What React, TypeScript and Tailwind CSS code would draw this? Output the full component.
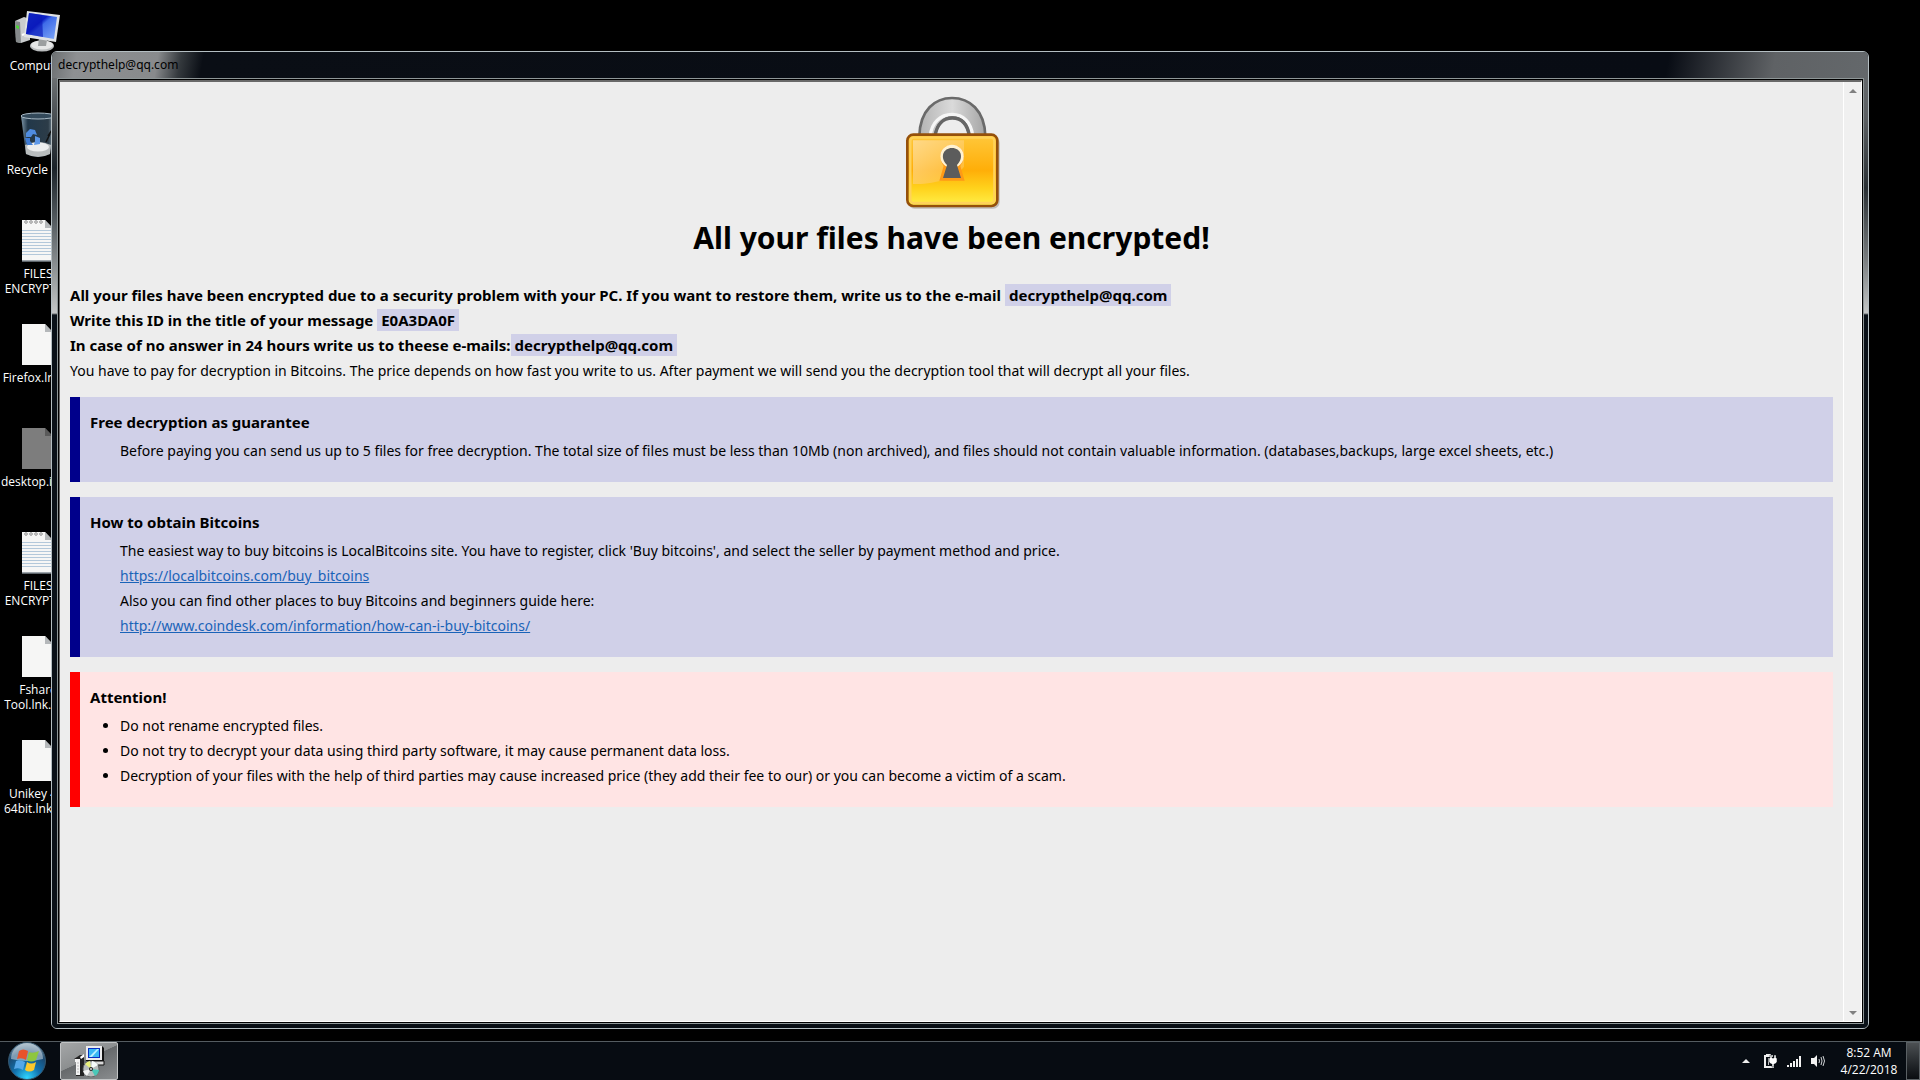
import React from 'react';

interface DesktopItem {
  kind: 'computer' | 'bin' | 'text' | 'blank' | 'system';
  lines: string[];
}

const desktopItems: DesktopItem[] = [
  { kind: 'computer', lines: ['Computer'] },
  { kind: 'bin', lines: ['Recycle Bin'] },
  { kind: 'text', lines: ['FILES', 'ENCRYPTED'] },
  { kind: 'blank', lines: ['Firefox.lnk.i..'] },
  { kind: 'system', lines: ['desktop.ini.i..'] },
  { kind: 'text', lines: ['FILES', 'ENCRYPTED'] },
  { kind: 'blank', lines: ['Fshare', 'Tool.lnk.id-..'] },
  { kind: 'blank', lines: ['Unikey 4.0', '64bit.lnk.id..'] },
];

const ComputerIcon: React.FC = () => (
  <svg viewBox="0 0 48 48" className="w-12 h-12" aria-hidden="true">
    <defs>
      <linearGradient id="screen" x1="0" y1="0" x2="1" y2="1">
        <stop offset="0" stopColor="#1a3fd0" />
        <stop offset="0.4" stopColor="#0a1ec4" />
        <stop offset="0.5" stopColor="#3f6ce8" />
        <stop offset="1" stopColor="#7fa8f8" />
      </linearGradient>
    </defs>
    <path d="M1 13 L10 9 L16 11 L16 32 L7 35 L2 34 Z" fill="#c9cccd" />
    <path d="M1 13 L6 14 L7 35 L2 34 Z" fill="#85898b" />
    <path d="M2 17 L5 18 V21 L2 20 Z" fill="#4fd03a" />
    <path d="M8 27 L14 25" stroke="#fff" strokeWidth="2" />
    <ellipse cx="28" cy="38" rx="12" ry="5.5" fill="#b9bcbd" />
    <ellipse cx="28" cy="37" rx="11" ry="4.5" fill="#e6e7e7" />
    <path d="M25 30 L33 32 L32 38 H24 Z" fill="#9c9fa0" />
    <path d="M13 3 L46 7 L42 34 L10 29 Z" fill="#dfe2e4" />
    <path d="M15 5 L43 9 L40 31 L12 26 Z" fill="url(#screen)" />
    <path d="M15 5 L28 7 L29 29 L12 26 Z" fill="#0a18b8" opacity="0.65" />
  </svg>
);

const BinIcon: React.FC = () => (
  <svg viewBox="0 0 48 48" className="w-12 h-12" aria-hidden="true">
    <defs>
      <linearGradient id="glass" x1="0" y1="0" x2="1" y2="0">
        <stop offset="0" stopColor="#7f97a8" />
        <stop offset="0.2" stopColor="#22384a" />
        <stop offset="0.8" stopColor="#2c3c48" />
        <stop offset="1" stopColor="#93a5b0" />
      </linearGradient>
    </defs>
    <path d="M7 4 L41 4 L36 42 Q24 48 12 42 Z" fill="url(#glass)" />
    <ellipse cx="24" cy="4" rx="17" ry="3" fill="#33495a" stroke="#a9bac6" strokeWidth="1" />
    <path d="M11 33 Q24 27 37 33 L36 42 Q24 48 12 42 Z" fill="#b9bdbe" />
    <ellipse cx="24" cy="35" rx="11" ry="4.5" fill="#eceeee" />
    <path d="M12 21 L16 17 L21 18 L23 23 L19 22 L17 25 L12 25 Z" fill="#4f8ce0" />
    <path d="M11 26 L16 26 L16 29 L19 33 L13 33 Z" fill="#3f7bd3" />
    <path d="M21 24 L26 26 L26 32 L20 33 L21 29 Z" fill="#5d98e8" />
    <path d="M34 24 L38 18 M32 30 L36 22" stroke="#111" strokeWidth="1.5" />
  </svg>
);

const FileIcon: React.FC<{ kind: DesktopItem['kind'] }> = ({ kind }) => (
  <svg viewBox="0 0 48 48" className="w-12 h-12" aria-hidden="true">
    <path d="M8 4 H31 L40 14 V45 H8 Z" fill={kind === 'system' ? '#7d7d7d' : '#f6f6f5'} />
    <path d="M31 4 V12 H39 Z" fill={kind === 'system' ? '#5a5a5a' : '#b5b8ba'} />
    {kind === 'text' && (
      <g>
        <g stroke="#b3c8da" strokeWidth="1">
          <path d="M8 14.5 H40 M8 17.5 H40 M8 20.5 H40 M8 23.5 H40 M8 26.5 H40 M8 29.5 H40 M8 32.5 H40 M8 35.5 H40 M8 38.5 H40" />
        </g>
        <g fill="none" stroke="#777" strokeWidth="0.8">
          <circle cx="12" cy="6" r="1.3" />
          <circle cx="17" cy="6" r="1.3" />
          <circle cx="22" cy="6" r="1.3" />
          <circle cx="27" cy="6" r="1.3" />
        </g>
        <path d="M8 45 H40" stroke="#7f8990" strokeWidth="1.5" />
      </g>
    )}
  </svg>
);

const DesktopIcon: React.FC<{ item: DesktopItem }> = ({ item }) => (
  <li className="h-[104px] flex flex-col items-center">
    {item.kind === 'computer' && <ComputerIcon />}
    {item.kind === 'bin' && <BinIcon />}
    {item.kind !== 'computer' && item.kind !== 'bin' && <FileIcon kind={item.kind} />}
    <div className="mt-0.5 text-xs leading-[15px] text-white text-center whitespace-nowrap">
      {item.lines.map((line) => (
        <div key={line}>{line}</div>
      ))}
    </div>
  </li>
);

const Padlock: React.FC = () => (
  <svg viewBox="72 45 288 345" className="w-24 h-[115px]" role="img" aria-label="Padlock">
    <defs>
      <linearGradient id="body" x1="0" y1="0" x2="0" y2="1">
        <stop offset="0" stopColor="#ffc83c" />
        <stop offset="0.5" stopColor="#ffae08" />
        <stop offset="0.75" stopColor="#ffd21c" />
        <stop offset="1" stopColor="#fff04a" />
      </linearGradient>
      <linearGradient id="shine" x1="0" y1="0" x2="1" y2="1">
        <stop offset="0" stopColor="#ffd988" />
        <stop offset="1" stopColor="#ffc65a" stopOpacity="0.4" />
      </linearGradient>
      <linearGradient id="shackle" x1="0" y1="0" x2="1" y2="0">
        <stop offset="0" stopColor="#b4b4b4" />
        <stop offset="0.5" stopColor="#dadada" />
        <stop offset="1" stopColor="#a4a4a4" />
      </linearGradient>
    </defs>
    <path d="M118 168 C120 90 165 54 216 54 C268 54 314 90 316 168 H268 C262 130 242 113 217 113 C192 113 171 130 165 168 Z" fill="url(#shackle)" stroke="#6a6a6a" strokeWidth="8" />
    <path d="M151 168 C154 128 182 103 216 103 C250 103 274 128 278 168" fill="none" stroke="#f6f6f6" strokeWidth="10" />
    <path d="M165 168 C171 130 192 114 217 114 C242 114 262 130 268 168" fill="none" stroke="#666" strokeWidth="10" />
    <rect x="84" y="168" width="275" height="218" rx="20" fill="#8a8078" opacity="0.45" />
    <rect x="82" y="164" width="270" height="214" rx="18" fill="url(#body)" stroke="#95500a" strokeWidth="8" />
    <rect x="91" y="173" width="252" height="196" rx="10" fill="none" stroke="#ffd25a" strokeWidth="7" />
    <path d="M99 181 H252 V260 C220 300 160 312 99 312 Z" fill="url(#shine)" />
    <path d="M178 302 L191 258 C170 225 186 195 216 195 C247 195 262 225 241 258 L254 302 Z" fill="#ff9a16" />
    <circle cx="216" cy="229" r="35" fill="#fff2d2" />
    <path d="M189 294 L201 255 C178 232 190 204 216 204 C242 204 254 232 231 255 L243 294 Z" fill="#5c5c5c" />
  </svg>
);

const Tag: React.FC<{ children: React.ReactNode }> = ({ children }) => (
  <span className="px-1 py-px bg-[#d0d0e8]">{children}</span>
);

interface NoticeProps {
  title: string;
  tone: string;
  children: React.ReactNode;
}

const Notice: React.FC<NoticeProps> = ({ title, tone, children }) => (
  <section className={`border-l-[10px] pt-[13px] pb-[19px] px-[10px] ${tone}`}>
    <h2 className="text-[15px] leading-[25px] font-bold mb-[3px]">{title}</h2>
    {children}
  </section>
);

const ScrollBar: React.FC = () => (
  <div className="w-[18px] shrink-0 flex flex-col justify-between bg-[#f0f0f0] border-l border-white">
    <button type="button" aria-label="Scroll up" className="h-[17px] flex items-center justify-center">
      <svg viewBox="0 0 8 4" className="w-2 h-1"><path d="M4 0 L8 4 H0 Z" fill="#808080" /></svg>
    </button>
    <button type="button" aria-label="Scroll down" className="h-[17px] flex items-center justify-center">
      <svg viewBox="0 0 8 4" className="w-2 h-1"><path d="M0 0 H8 L4 4 Z" fill="#808080" /></svg>
    </button>
  </div>
);

const NoteContent: React.FC = () => (
  <div className="flex-1 px-[10px] pt-[13px] text-sm leading-[25px] text-black">
    <div className="flex flex-col items-center">
      <Padlock />
      <h1 className="mt-[10px] mb-[27px] text-[30px] leading-9 font-bold">All your files have been encrypted!</h1>
    </div>

    <div className="text-[15px] leading-[25px] font-bold">
      <p>
        All your files have been encrypted due to a security problem with your PC. If you want to restore them, write us to the e-mail <Tag>decrypthelp@qq.com</Tag>
      </p>
      <p>
        Write this ID in the title of your message <Tag>E0A3DA0F</Tag>
      </p>
      <p>
        In case of no answer in 24 hours write us to theese e-mails:<Tag>decrypthelp@qq.com</Tag>
      </p>
    </div>
    <p>
      You have to pay for decryption in Bitcoins. The price depends on how fast you write to us. After payment we will send you the decryption tool that will decrypt all your files.
    </p>

    <div className="mt-[14px] flex flex-col gap-[15px]">
      <Notice title="Free decryption as guarantee" tone="border-[#00008b] bg-[#d0d0e8]">
        <p className="pl-[30px]">
          Before paying you can send us up to 5 files for free decryption. The total size of files must be less than 10Mb (non archived), and files should not contain valuable information. (databases,backups, large excel sheets, etc.)
        </p>
      </Notice>

      <Notice title="How to obtain Bitcoins" tone="border-[#00008b] bg-[#d0d0e8]">
        <div className="pl-[30px]">
          <p>The easiest way to buy bitcoins is LocalBitcoins site. You have to register, click 'Buy bitcoins', and select the seller by payment method and price.</p>
          <p><a href="#localbitcoins" className="text-[#1a63b8] underline">https://localbitcoins.com/buy_bitcoins</a></p>
          <p>Also you can find other places to buy Bitcoins and beginners guide here:</p>
          <p><a href="#coindesk" className="text-[#1a63b8] underline">http://www.coindesk.com/information/how-can-i-buy-bitcoins/</a></p>
        </div>
      </Notice>

      <Notice title="Attention!" tone="border-[#ff0000] bg-[#ffe4e4]">
        <ul className="pl-[30px] list-disc">
          <li>Do not rename encrypted files.</li>
          <li>Do not try to decrypt your data using third party software, it may cause permanent data loss.</li>
          <li>Decryption of your files with the help of third parties may cause increased price (they add their fee to our) or you can become a victim of a scam.</li>
        </ul>
      </Notice>
    </div>
  </div>
);

const NoteWindow: React.FC = () => (
  <div className="absolute left-[51px] right-[51px] top-[51px] bottom-3 flex flex-col rounded-md border border-[#b4bec2] bg-[#080e14] overflow-hidden">
    <header className="h-[26px] shrink-0 flex items-center pl-[6px] bg-[linear-gradient(100deg,#6c7072_0px,#8e9092_25px,#888a8c_105px,#34393d_128px,#0a0e15_150px,#080c14_calc(100%_-_200px),#5f6265_calc(100%_-_95px),#64686b_100%)]">
      <span className="text-xs text-black">decrypthelp@qq.com</span>
    </header>
    <div className="flex-1 flex">
      <div className="w-[5px] shrink-0 bg-[linear-gradient(#6c7072_0px,#1a2228_90px,#5d6468_150px,#c4c6c6_235px,#0a1118_237px)]" />
      <div className="flex-1 flex border border-[#8e9697] mb-1">
        <div className="flex-1 flex border border-black">
          <div className="flex-1 flex border-t-2 border-l border-r border-b border-t-[#696969] border-l-[#696969] border-r-white border-b-white bg-[#ededed]">
            <NoteContent />
            <ScrollBar />
          </div>
        </div>
      </div>
      <div className="w-1 shrink-0 bg-[linear-gradient(#64686b_0px,#5c6063_40px,#2a3034_110px,#777b7d_180px,#c4c6c6_235px,#0a1118_237px)]" />
    </div>
  </div>
);

const StartOrb: React.FC = () => (
  <svg viewBox="0 0 38 38" className="w-[38px] h-[38px]" aria-hidden="true">
    <defs>
      <radialGradient id="orb" cx="0.5" cy="0.95" r="0.9">
        <stop offset="0" stopColor="#2fd6ff" />
        <stop offset="0.4" stopColor="#1272ae" />
        <stop offset="0.75" stopColor="#1a4a72" />
        <stop offset="1" stopColor="#7d98ab" />
      </radialGradient>
    </defs>
    <circle cx="19" cy="19" r="18.5" fill="url(#orb)" stroke="#35566c" />
    <path d="M3 17 A16 16 0 0 1 35 17 Q19 21 3 17 Z" fill="#dfeaf0" opacity="0.5" />
    <path d="M11 9 Q15 6 20 9 L18 18 Q14 15 9 17 Z" fill="#e8532a" />
    <path d="M21 10 Q25 12 31 9 L28 18 Q23 21 19 18 Z" fill="#8ec63f" />
    <path d="M8 19 Q12 17 17 20 L15 28 Q11 25 6 27 Z" fill="#55a8e8" />
    <path d="M19 20 Q23 23 28 20 L26 28 Q21 31 17 28 Z" fill="#fbc82c" />
  </svg>
);

const InstallerIcon: React.FC = () => (
  <svg viewBox="0 0 32 32" className="w-8 h-8" aria-hidden="true">
    <path d="M13 1 H29 L31 3 V16 H13 Z" fill="#111" />
    <rect x="13" y="1" width="16" height="14" fill="#ececec" />
    <rect x="15" y="3" width="12" height="10" fill="#0a2fc0" />
    <rect x="16" y="4" width="10" height="8" fill="#38b8f4" />
    <path d="M16 12 L24 4 H26 L19 12 Z" fill="#b8f0ff" />
    <path d="M15 16 H31 V20 H15 Z" fill="#d8d8d8" stroke="#111" strokeWidth="1" />
    <path d="M1 14 L7 10 H11 V31 L3 31 V14 Z" fill="#222" />
    <path d="M2 14 H7 V30 H3 V17 H2 Z" fill="#f3f3f3" />
    <path d="M4 18 H6 M4 21 H6 M4 24 H6 M4 27 H6" stroke="#bbb" strokeWidth="1" />
    <path d="M7 12 L11 9 V12 L8 14 Z" fill="#fff" />
    <circle cx="18" cy="24" r="8" fill="#b8bcbc" stroke="#555" strokeWidth="0.8" />
    <path d="M18 24 L12 19 A8 8 0 0 1 17 16 Z" fill="#e9f07a" />
    <path d="M18 24 L19 16 A8 8 0 0 1 25 20 Z" fill="#f6fafa" />
    <path d="M18 24 L26 25 A8 8 0 0 1 22 31 Z" fill="#49c8b8" />
    <path d="M18 24 L14 31 A8 8 0 0 1 10 26 Z" fill="#f4f4f4" />
    <circle cx="18" cy="24" r="2" fill="#222" />
    <circle cx="18" cy="24" r="1" fill="#ddd" />
  </svg>
);

const Tray: React.FC = () => (
  <div className="flex items-center">
    <button type="button" aria-label="Show hidden icons" className="w-4 h-4 flex items-center justify-center">
      <svg viewBox="0 0 8 4" className="w-2 h-1"><path d="M4 0 L8 4 H0 Z" fill="#eee" /></svg>
    </button>
    <button type="button" aria-label="Power" className="ml-2">
      <svg viewBox="0 0 16 16" className="w-4 h-4">
        <path d="M2 2 H4 V1 H9 V2 H11 V4 H2 Z M2 4 H4 V15 H2 Z M2 13 H12 V15 H2 Z" fill="#eee" />
        <path d="M6 5 H7 V12 H6 Z" fill="#bbb" />
        <path d="M8 2 H10 V5 H12 V2 H14 V5 H15 V9 L13 11 H12 V14 H10 V11 H9 L7 9 V5 H8 Z" fill="#fff" stroke="#0a1016" strokeWidth="0.5" />
      </svg>
    </button>
    <button type="button" aria-label="Network" className="ml-2">
      <svg viewBox="0 0 16 16" className="w-4 h-4">
        <path d="M1 12 H3 V14 H1 Z M4 10 H6 V14 H4 Z M7 8 H9 V14 H7 Z M10 6 H12 V14 H10 Z M13 3 H15 V14 H13 Z" fill="#f2f2f2" />
      </svg>
    </button>
    <button type="button" aria-label="Volume" className="ml-2">
      <svg viewBox="0 0 16 16" className="w-4 h-4">
        <path d="M1 5 H4 L7 2 V14 L4 11 H1 Z" fill="#f2f2f2" />
        <path d="M9 6 Q10 8 9 10 M11 4 Q13 8 11 12 M13 3 Q16 8 13 13" fill="none" stroke="#cfd3d5" strokeWidth="1" />
      </svg>
    </button>
    <time className="ml-1.5 w-[74px] text-xs leading-[17px] text-white text-center">
      8:52 AM
      <br />
      4/22/2018
    </time>
    <button type="button" aria-label="Show desktop" className="w-[14px] h-[38px] border border-[#5a6064] bg-linear-to-b from-[#4c5053] to-[#0a0d11]" />
  </div>
);

const TaskBar: React.FC = () => (
  <footer className="h-[39px] shrink-0 flex items-center justify-between border-t border-[#545c60] bg-[#070c12] pl-2">
    <div className="flex items-center gap-[14px]">
      <button type="button" aria-label="Start">
        <StartOrb />
      </button>
      <button
        type="button"
        aria-label="decrypthelp@qq.com"
        className="w-[58px] h-[38px] flex items-center justify-center rounded-xs border border-[#c2c4c5] bg-[linear-gradient(155deg,#a4a6a7_0%,#8c8f90_45%,#66696b_46%,#8a8d8f_100%)]"
      >
        <InstallerIcon />
      </button>
    </div>
    <Tray />
  </footer>
);

const App: React.FC = () => (
  <div className="min-h-screen flex flex-col bg-black font-['Open_Sans','Noto_Sans',sans-serif]">
    <main className="relative flex-1 flex">
      <ul className="w-[76px] pt-2">
        {desktopItems.map((item, index) => (
          <DesktopIcon key={index} item={item} />
        ))}
      </ul>
      <div className="font-['Noto_Sans',sans-serif]">
        <NoteWindow />
      </div>
    </main>
    <TaskBar />
  </div>
);

export default App;
